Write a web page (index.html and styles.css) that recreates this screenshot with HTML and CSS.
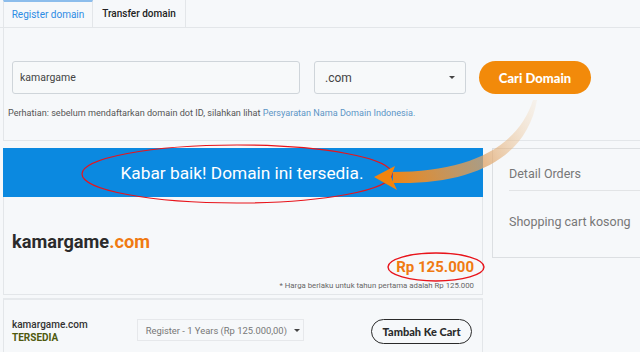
FILE: index.html
```html
<!DOCTYPE html>
<html lang="id">
<head>
  <meta charset="UTF-8">
  <meta name="viewport" content="width=device-width,initial-scale=1">
  <title>Cek Domain</title>
  <link rel="stylesheet" href="styles.css">
</head>
<body>
  <div class="page">
    <div class="tabs">
      <div class="tab active">Register domain</div>
      <div class="tab">Transfer domain</div>
    </div>

    <div class="search-area">
      <div class="search-row">
        <div class="field">kamargame</div>
        <div class="field select">.com <span class="caret"></span></div>
        <button class="btn-cari">Cari Domain</button>
      </div>
      <p class="notice">Perhatian: sebelum mendaftarkan domain dot ID, silahkan lihat <a href="#">Persyaratan Nama Domain Indonesia.</a></p>
    </div>

    <div class="results">
      <div class="result-main">
        <div class="banner">Kabar baik! Domain ini tersedia.</div>
        <div class="panel">
          <div class="domain-name">kamargame<span>.com</span></div>
          <div class="price">Rp 125.000</div>
          <div class="price-note">* Harga berlaku untuk tahun pertama adalah Rp 125.000</div>
        </div>
        <div class="panel-row">
          <div class="row-name">
            <div>kamargame.com</div>
            <div class="status">TERSEDIA</div>
          </div>
          <div class="period">Register - 1 Years (Rp 125.000,00) <span class="caret"></span></div>
          <button class="btn-cart">Tambah Ke Cart</button>
        </div>
      </div>

      <div class="sidebar">
        <div class="side-title">Detail Orders</div>
        <div class="side-empty">Shopping cart kosong</div>
      </div>
    </div>

    <!-- coretan anotasi di atas screenshot -->
    <svg class="marks" width="640" height="352" viewBox="0 0 640 352">
      <defs>
        <linearGradient id="arrowGrad" gradientUnits="userSpaceOnUse" x1="538" y1="100" x2="385" y2="178">
          <stop offset="0" stop-color="#f3d2a8" stop-opacity="0.15"/>
          <stop offset="0.45" stop-color="#dfa366" stop-opacity="0.75"/>
          <stop offset="1" stop-color="#f3840e"/>
        </linearGradient>
      </defs>
      <ellipse cx="237" cy="174" rx="155" ry="29" fill="none" stroke="#e8141b" stroke-width="1.2"/>
      <ellipse cx="436" cy="267" rx="48" ry="14" fill="none" stroke="#e8141b" stroke-width="1.4"/>
      <path d="M533 100 C518 148 468 172 393 172 L393 183 C474 185 527 158 537 100 Z" fill="url(#arrowGrad)"/>
      <polygon points="374,177 395,166 391,177 397,190" fill="#f3840e"/>
    </svg>
  </div>
</body>
</html>
```

FILE: styles.css
```css
:root {
  --page-bg: #f6f8fa;
  --line: #e3e6e9;
  --blue: #0b89e0;
  --orange: #f28a0a;
  --font: Roboto, 'Liberation Sans', Arial, sans-serif;
  --font-bold: Lato, 'Liberation Sans', Arial, sans-serif;
}
body {
  margin: 0;
  background: var(--page-bg);
  font-family: var(--font);
  color: #333;
  overflow: hidden;
}
.page {
  position: relative;
  width: 640px;
  height: 352px;
  overflow: hidden;
}

/* tabs */
.tabs {
  display: flex;
  height: 27px;
  padding-left: 3px;
  border-bottom: 1px solid var(--line);
}
.tab {
  width: 92px;
  display: flex;
  align-items: center;
  justify-content: center;
  font-size: 10px;
  font-weight: 500;
  color: #222;
  border-right: 1px solid var(--line);
}
.tab.active {
  width: 90px;
  color: #2d8ce4;
  font-weight: 400;
  border-top: 2px solid #8cbdec;
  border-left: 1px solid var(--line);
  box-sizing: border-box;
}

/* search */
.search-area {
  margin-left: 3px;
  border-left: 1px solid var(--line);
  border-bottom: 1px solid var(--line);
  padding: 33px 0 20px 4px;
}
.search-row {
  display: flex;
  margin-left: 4px;
  height: 33px;
}
.field {
  width: 288px;
  box-sizing: border-box;
  border: 1px solid #cfd5da;
  border-radius: 3px;
  background: #f7f9fa;
  display: flex;
  align-items: center;
  padding-left: 7px;
  font-size: 10.5px;
  color: #444;
}
.field.select {
  width: 152px;
  margin-left: 14px;
  padding: 0 10px;
  font-size: 12px;
  justify-content: space-between;
}
.caret {
  width: 0; height: 0;
  border-left: 3px solid transparent;
  border-right: 3px solid transparent;
  border-top: 3px solid #444;
}
.btn-cari {
  width: 112px;
  margin-left: 13px;
  border: none;
  border-radius: 17px;
  background: var(--orange);
  color: #fff;
  font-family: var(--font-bold);
  font-weight: 900;
  font-size: 13px;
}
.notice {
  margin: 12px 0 0 0;
  font-size: 9.1px;
  line-height: 14px;
  color: #555;
}
.notice a {
  color: #5d96c6;
  text-decoration: none;
}

/* results */
.results {
  display: grid;
  grid-template-columns: 480px 170px;
  gap: 9px;
  margin: 7px 0 0 3px;
  align-items: start;
}
.banner {
  height: 49px;
  background: var(--blue);
  color: #fff;
  font-size: 17.3px;
  display: flex;
  align-items: center;
  justify-content: center;
  padding-right: 2px;
}
.panel {
  border: 1px solid var(--line);
  border-top: none;
  padding: 33px 8px 4px 8px;
  height: 98px;
  box-sizing: border-box;
}
.domain-name {
  font-size: 18.2px;
  line-height: 24px;
  font-weight: 700;
  color: #2b2b2b;
}
.domain-name span { color: #f07a12; }
.price {
  margin-top: 3px;
  text-align: right;
  font-size: 15px;
  line-height: 20px;
  font-weight: 700;
  color: #f07a12;
}
.price-note {
  margin-top: 4px;
  text-align: right;
  font-size: 7.8px;
  line-height: 10px;
  color: #666;
}
.panel-row {
  margin-top: 3px;
  border: 1px solid var(--line);
  border-top: 2px solid #e6e9ec;
  height: 60px;
  box-sizing: border-box;
  padding: 18px 10px 0 8px;
  display: flex;
  align-items: flex-start;
}
.row-name {
  width: 125px;
  font-size: 10px;
  line-height: 13px;
  font-weight: 500;
  color: #333;
}
.status {
  color: #4f5a0e;
  font-weight: 700;
}
.period {
  width: 168px;
  height: 22px;
  margin-top: 1px;
  box-sizing: border-box;
  border: 1px solid #e6e8eb;
  display: flex;
  align-items: center;
  gap: 7px;
  padding: 0 0 0 8px;
  font-size: 9.4px;
  white-space: nowrap;
  color: #777;
}
.btn-cart {
  width: 101px;
  height: 25px;
  margin: 1px 0 0 67px;
  background: var(--page-bg);
  border: 1.5px solid #2a2a2a;
  border-radius: 13px;
  font-family: var(--font-bold);
  font-weight: 900;
  font-size: 11px;
  color: #2a2a2a;
}

/* sidebar */
.sidebar {
  height: 110px;
  box-sizing: border-box;
  border: 1px solid #dcdfe2;
  padding: 17px 0 0 16px;
  color: #777;
  font-size: 12.5px;
  line-height: 16px;
}
.side-title {
  padding-bottom: 8px;
  border-bottom: 1px solid #e2e4e6;
}
.side-empty { margin-top: 23px; }

.marks {
  position: absolute;
  top: 0;
  left: 0;
  pointer-events: none;
}
```
